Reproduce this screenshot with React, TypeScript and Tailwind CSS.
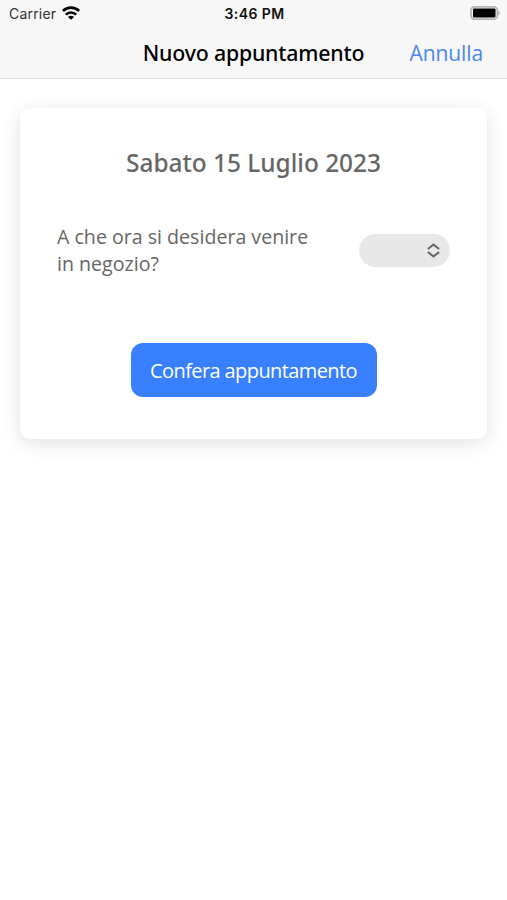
import React from 'react';

function StatusBar() {
  return (
    <div className="flex h-[26px] items-center justify-between pl-[9px] pr-[7px] font-['Inter',sans-serif] text-[14px] text-[#111]">
      <div className="flex w-[100px] items-center gap-[6px]">
        <span className="tracking-[0.2px] text-[#333]">Carrier</span>
        <svg width="18" height="14" viewBox="0 0 18 14" fill="none" stroke="black" strokeWidth="2.6">
          <path d="M0.900 5a11.500 11.500 0 0 1 16.200 0" />
          <path d="M3.800 8.600a7.400 7.400 0 0 1 10.400 0" />
          <path d="M9 13.800L6 10.900a4.200 4.200 0 0 1 6 0z" fill="black" stroke="none" />
        </svg>
      </div>
      <span className="font-semibold tracking-[0.4px]">3:46 PM</span>
      <div className="flex w-[100px] justify-end">
        <svg width="30" height="14" viewBox="0 0 30 14">
          <rect x="1" y="0.900" width="26.400" height="12.200" rx="3.500" fill="none" stroke="#b4b4b4" strokeWidth="1.800" />
          <rect x="3" y="2.500" width="22.500" height="9" rx="1" fill="black" />
          <path d="M28.200 4.800v4.600c1.100-.4 1.800-1.300 1.800-2.300s-.7-1.900-1.800-2.300z" fill="#b4b4b4" />
        </svg>
      </div>
    </div>
  );
}

export default function App() {
  return (
    <div className="h-[900px] w-[507px] overflow-hidden bg-white font-['Open_Sans',sans-serif]">
      {/* Header */}
      <header className="h-[79px] border-b border-[#dcdcdc] bg-[#f7f7f7]">
        <StatusBar />
        <div className="grid h-[54px] grid-cols-[1fr_auto_1fr] items-center">
          <span />
          <h1 className="font-['Noto_Sans',sans-serif] text-[21.300px] font-medium tracking-[-0.18px] text-black">Nuovo appuntamento</h1>
          <button className="justify-self-end pt-[2px] pr-[24px] text-[21px] tracking-[-0.1px] text-[#4a86f0]">Annulla</button>
        </div>
      </header>

      {/* Appointment card */}
      <section className="mx-[20px] mt-[29px] h-[331px] rounded-[10px] bg-white px-[37px] pt-[36px] shadow-[0_4px_20px_rgba(0,0,0,0.12)]">
        <h2 className="text-center font-['Noto_Sans',sans-serif] text-[24.400px] leading-[38px] font-medium text-[#666]">
          Sabato 15 Luglio 2023
        </h2>
        <div className="mt-[41px] flex items-center justify-between text-[#666]">
          <p className="w-[265px] text-[19.600px] leading-[27px]">A che ora si desidera venire in negozio?</p>
          <button className="flex h-[33px] w-[91px] items-center justify-end rounded-full bg-[#e8e8e8] pr-[10px]">
            <svg width="13" height="15" viewBox="0 0 13 15" fill="none" stroke="#666" strokeWidth="2.1">
              <path d="M0.900 6l5.600-4.500L12.100 6M0.900 9l5.600 4.500L12.100 9" />
            </svg>
          </button>
        </div>
        <div className="mt-[66px] flex justify-center">
          <button className="h-[54px] w-[246px] rounded-[12px] bg-[#3880ff] pt-[2px] text-[20px] tracking-[-0.03em] text-white">
            Confera appuntamento
          </button>
        </div>
      </section>
    </div>
  );
}
